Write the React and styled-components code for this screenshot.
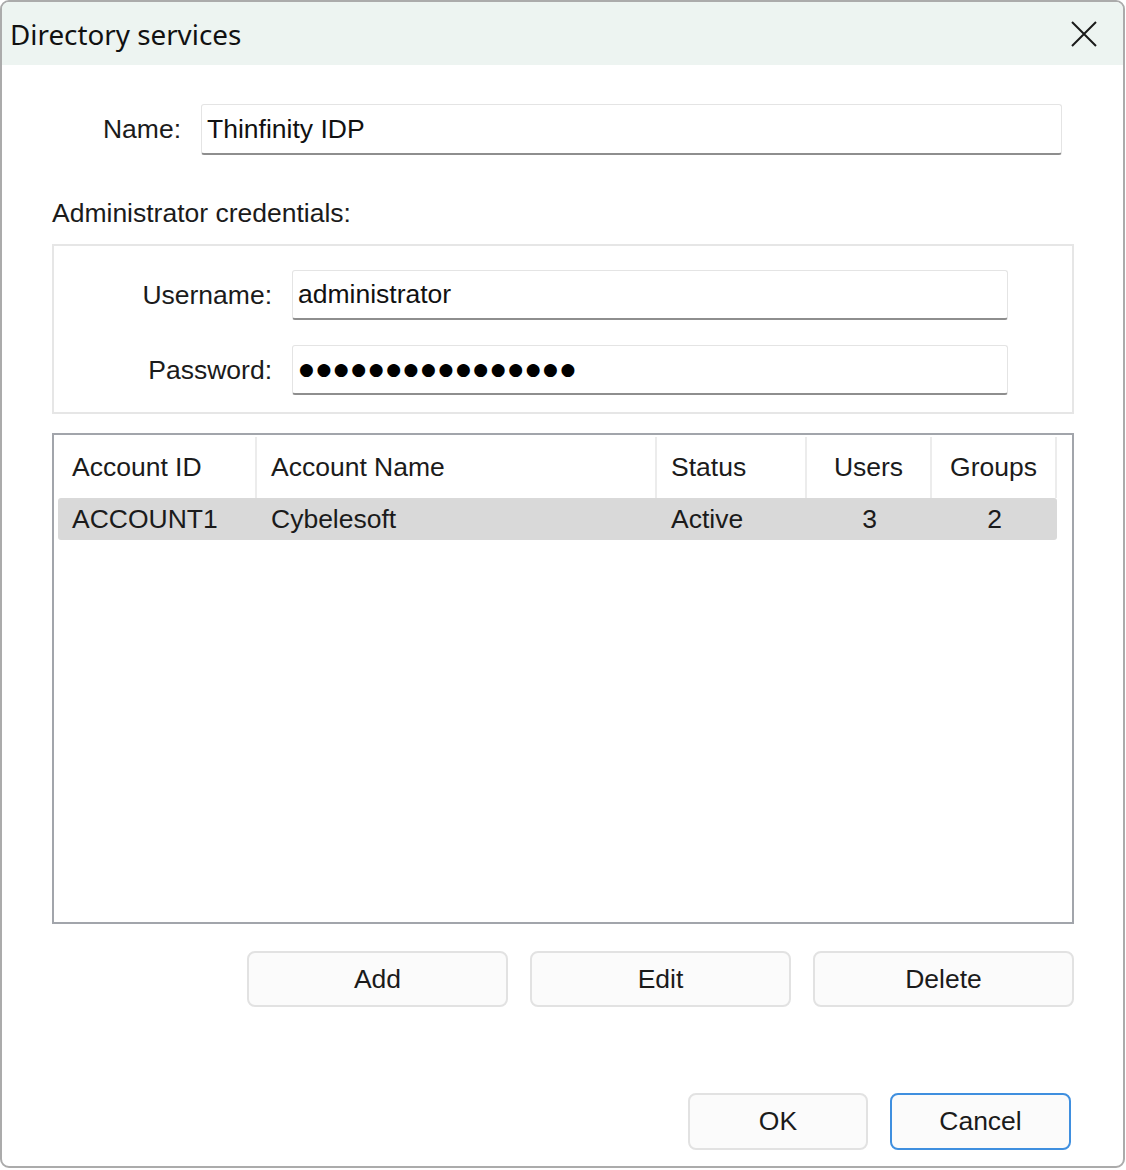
import React from "react";
import styled, { createGlobalStyle } from "styled-components";

const GlobalStyle = createGlobalStyle`
  html, body {
    margin: 0;
    padding: 0;
    background: #ffffff;
  }
  body {
    font-family: "Liberation Sans", Arial, sans-serif;
    color: #1b1b1b;
  }
`;

const Window = styled.div`
  box-sizing: border-box;
  width: 1125px;
  height: 1168px;
  border: 2px solid #ababab;
  border-radius: 9px;
  background: #ffffff;
  overflow: hidden;
  display: flex;
  flex-direction: column;
`;

const TitleBar = styled.div`
  height: 63px;
  flex: none;
  background: #edf4f1;
  display: flex;
  align-items: center;
  justify-content: space-between;
  padding: 0 26px 0 8px;
`;

const Title = styled.div`
  font-family: "Noto Sans", "Open Sans", sans-serif;
  font-size: 27.8px;
  color: #111111;
`;

const CloseButton = styled.div`
  width: 26px;
  height: 26px;
  display: flex;
  align-items: center;
  justify-content: center;
`;

const Body = styled.div`
  flex: 1;
  display: flex;
  flex-direction: column;
  padding: 39px 49px 15px 50px;
`;

const FieldRow = styled.div`
  display: grid;
  grid-template-columns: ${(p) => p.$labelWidth}px ${(p) => p.$inputWidth}px;
  column-gap: 20px;
  align-items: center;
`;

const Label = styled.div`
  font-size: 26.5px;
  text-align: right;
  white-space: nowrap;
`;

const Input = styled.div`
  box-sizing: border-box;
  height: ${(p) => p.$height || 51}px;
  background: #ffffff;
  border: 1px solid #e4e4e4;
  border-bottom: 2px solid #8e8e8e;
  border-radius: 3px;
  display: flex;
  align-items: center;
  padding-left: 5px;
  font-size: 26.5px;
  color: #111111;
  white-space: nowrap;
  overflow: hidden;
`;

const Dots = styled.span`
  font-family: "DejaVu Sans", sans-serif;
  font-size: 17px;
  letter-spacing: 2.6px;
  color: #000000;
  padding-left: 1px;
  position: relative;
  top: -1px;
`;

const SectionLabel = styled.div`
  margin-top: 42px;
  height: 32px;
  line-height: 32px;
  font-size: 26.5px;
`;

const GroupBox = styled.div`
  box-sizing: border-box;
  margin-top: 15px;
  height: 170px;
  border: 2px solid #e6e6e6;
  padding: 24px 0 0 0;
  display: flex;
  flex-direction: column;
  gap: 25px;
`;

const ListView = styled.div`
  box-sizing: border-box;
  margin-top: 19px;
  height: 491px;
  border: 2px solid #a2a5ab;
  padding: 2px 0 0 4px;
`;

const Columns = styled.div`
  display: grid;
  width: 999px;
  grid-template-columns: 199px 400px 150px 125px 125px;
`;

const HeaderCell = styled.div`
  box-sizing: border-box;
  height: 61px;
  border-right: 2px solid #ececec;
  display: flex;
  align-items: center;
  justify-content: ${(p) => (p.$center ? "center" : "flex-start")};
  padding-left: ${(p) => (p.$center ? 0 : 14)}px;
  font-size: 26.5px;
  white-space: nowrap;
`;

const SelectedRow = styled(Columns)`
  height: 42px;
  background: #d9d9d9;
  border-radius: 3px;
`;

const Cell = styled.div`
  display: flex;
  align-items: center;
  justify-content: ${(p) => (p.$center ? "center" : "flex-start")};
  padding-left: ${(p) => (p.$center ? 0 : 14)}px;
  font-size: 26.5px;
  white-space: nowrap;
`;

const ButtonRow = styled.div`
  display: flex;
  justify-content: flex-end;
  gap: ${(p) => p.$gap}px;
  margin-top: ${(p) => p.$top}px;
  padding-right: ${(p) => p.$right || 0}px;
`;

const Button = styled.div`
  box-sizing: border-box;
  width: ${(p) => p.$width}px;
  height: ${(p) => p.$height}px;
  border: 2px solid ${(p) => (p.$default ? "#3f8fdf" : "#e2e2e2")};
  border-radius: 8px;
  background: #fbfbfb;
  display: flex;
  align-items: center;
  justify-content: center;
  font-size: 26.5px;
  color: #1b1b1b;
`;

export default function App() {
  return (
    <>
      <GlobalStyle />
      <Window>
        <TitleBar>
          <Title>Directory services</Title>
          <CloseButton>
            <svg width="26" height="26" viewBox="0 0 26 26">
              <path d="M1 1 L25 25 M25 1 L1 25" stroke="#1a1a1a" strokeWidth="2" />
            </svg>
          </CloseButton>
        </TitleBar>
        <Body>
          <FieldRow $labelWidth={129} $inputWidth={861}>
            <Label>Name:</Label>
            <Input>Thinfinity IDP</Input>
          </FieldRow>

          <SectionLabel>Administrator credentials:</SectionLabel>

          <GroupBox>
            <FieldRow $labelWidth={218} $inputWidth={716}>
              <Label>Username:</Label>
              <Input $height={50}>administrator</Input>
            </FieldRow>
            <FieldRow $labelWidth={218} $inputWidth={716}>
              <Label>Password:</Label>
              <Input $height={50}>
                <Dots>●●●●●●●●●●●●●●●●</Dots>
              </Input>
            </FieldRow>
          </GroupBox>

          <ListView>
            <Columns>
              <HeaderCell>Account ID</HeaderCell>
              <HeaderCell>Account Name</HeaderCell>
              <HeaderCell>Status</HeaderCell>
              <HeaderCell $center>Users</HeaderCell>
              <HeaderCell $center>Groups</HeaderCell>
            </Columns>
            <SelectedRow>
              <Cell>ACCOUNT1</Cell>
              <Cell>Cybelesoft</Cell>
              <Cell>Active</Cell>
              <Cell $center>3</Cell>
              <Cell $center>2</Cell>
            </SelectedRow>
          </ListView>

          <ButtonRow $gap={22} $top={27}>
            <Button $width={261} $height={56}>Add</Button>
            <Button $width={261} $height={56}>Edit</Button>
            <Button $width={261} $height={56}>Delete</Button>
          </ButtonRow>

          <ButtonRow $gap={22} $top={86} $right={3}>
            <Button $width={180} $height={57}>OK</Button>
            <Button $width={181} $height={57} $default>Cancel</Button>
          </ButtonRow>
        </Body>
      </Window>
    </>
  );
}
